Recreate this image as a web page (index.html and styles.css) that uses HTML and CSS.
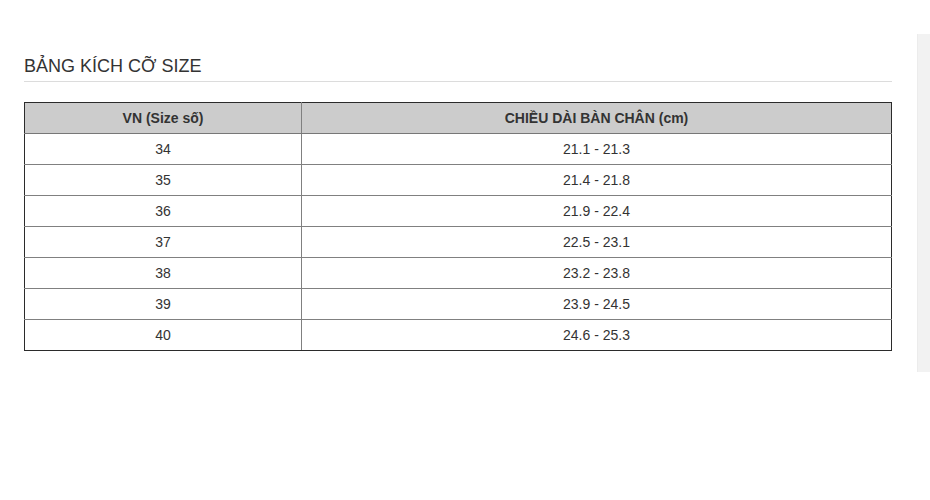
FILE: index.html
```html
<!DOCTYPE html>
<html lang="vi">
<head>
<meta charset="utf-8">
<title>Bảng kích cỡ size</title>
<link rel="stylesheet" href="styles.css">
</head>
<body>
<div class="page">
  <main class="main">
    <h2 class="title">BẢNG KÍCH CỠ SIZE</h2>
    <table class="size-table">
      <thead>
        <tr><th class="col-vn">VN (Size số)</th><th>CHIỀU DÀI BÀN CHÂN (cm)</th></tr>
      </thead>
      <tbody>
        <tr><td>34</td><td>21.1 - 21.3</td></tr>
        <tr><td>35</td><td>21.4 - 21.8</td></tr>
        <tr><td>36</td><td>21.9 - 22.4</td></tr>
        <tr><td>37</td><td>22.5 - 23.1</td></tr>
        <tr><td>38</td><td>23.2 - 23.8</td></tr>
        <tr><td>39</td><td>23.9 - 24.5</td></tr>
        <tr><td>40</td><td>24.6 - 25.3</td></tr>
      </tbody>
    </table>
  </main>
  <aside class="side"></aside>
</div>
</body>
</html>
```
FILE: styles.css
```css
html, body {
  margin: 0;
  padding: 0;
  background: #fff;
}
body {
  font-family: "Liberation Sans", Arial, sans-serif;
  color: #333;
}
.page {
  display: flex;
  align-items: flex-start;
  width: 930px;
}
.main {
  width: 868px;
  padding: 0 25px 0 24px;
}
.title {
  margin: 56px 0 20px;
  padding: 0 0 5px;
  font-size: 18px;
  line-height: 20px;
  font-weight: normal;
  color: #333;
  border-bottom: 1px solid #dcdcdc;
}
.size-table {
  width: 868px;
  border-collapse: collapse;
  border: 1px solid #2b2b2b;
  font-size: 14px;
}
.size-table th,
.size-table td {
  padding: 0;
  height: 30px;
  line-height: 30px;
  text-align: center;
  border: 1px solid #808080;
  color: #333;
}
.size-table thead th {
  background: #cccccc;
  font-weight: bold;
  border-top: 1px solid #2b2b2b;
  border-bottom: 1px solid #777;
}
.size-table .col-vn {
  width: 276px;
}
.size-table tr > :first-child { border-left: 1px solid #2b2b2b; }
.size-table tr > :last-child { border-right: 1px solid #2b2b2b; }
.size-table tbody tr:last-child td { border-bottom: 1px solid #2b2b2b; }
.side {
  width: 13px;
  height: 338px;
  margin-top: 34px;
  background: #f2f2f2;
  border-left: 1px solid #ececec;
  box-sizing: border-box;
}
```
